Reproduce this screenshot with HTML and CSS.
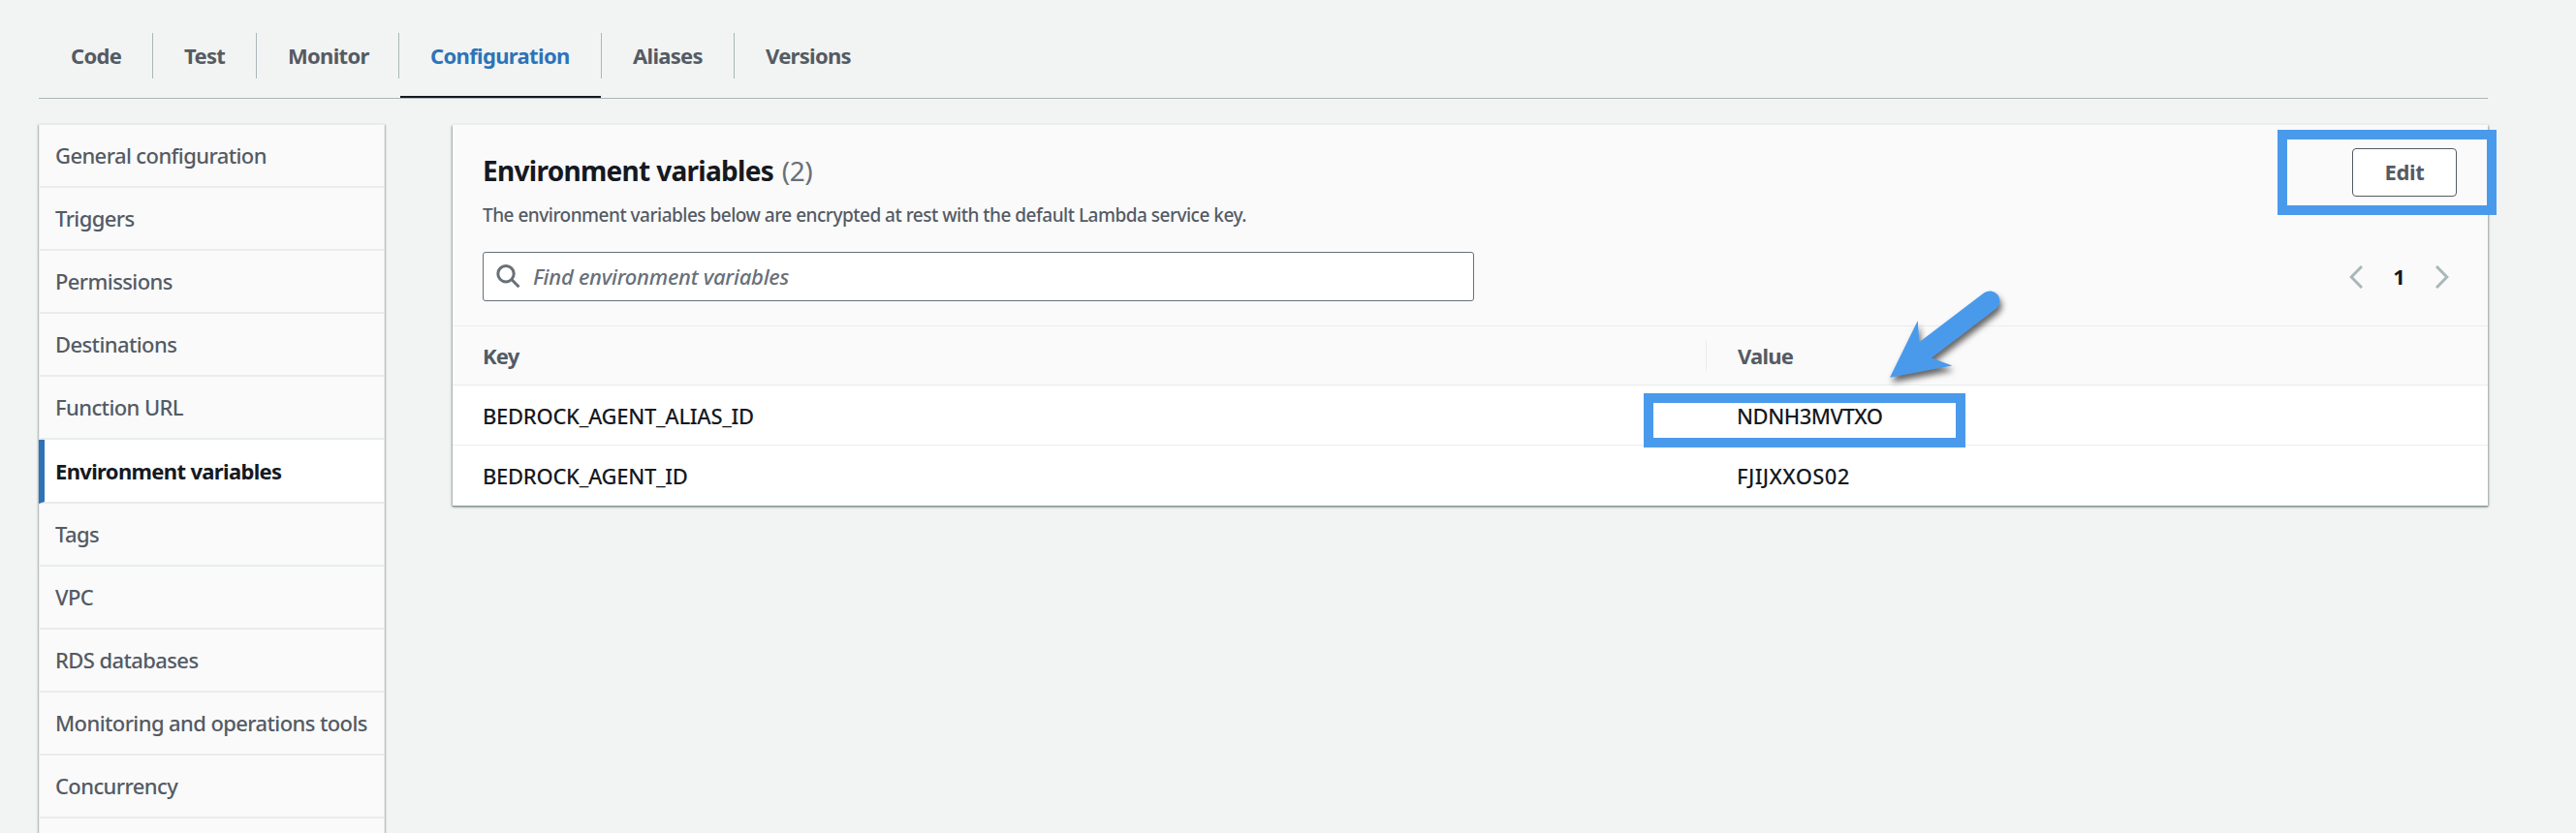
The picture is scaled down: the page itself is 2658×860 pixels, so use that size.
FILE: index.html
```html
<!DOCTYPE html>
<html lang="en">
<head>
<meta charset="utf-8">
<title>Configuration - Environment variables</title>
<link rel="stylesheet" href="styles.css">
</head>
<body>
<nav class="tabs">
  <a class="tab tab-code">Code</a>
  <a class="tab tab-test">Test</a>
  <a class="tab tab-monitor">Monitor</a>
  <a class="tab tab-configuration active">Configuration</a>
  <a class="tab tab-aliases">Aliases</a>
  <a class="tab tab-versions">Versions</a>
</nav>
<div class="content">
  <aside class="side">
    <a class="side-item">General configuration</a>
    <a class="side-item">Triggers</a>
    <a class="side-item">Permissions</a>
    <a class="side-item">Destinations</a>
    <a class="side-item">Function URL</a>
    <a class="side-item selected">Environment variables</a>
    <a class="side-item">Tags</a>
    <a class="side-item">VPC</a>
    <a class="side-item">RDS databases</a>
    <a class="side-item">Monitoring and operations tools</a>
    <a class="side-item">Concurrency</a>
  </aside>
  <main class="card">
    <header class="card-head">
      <div class="head-row">
        <div>
          <h2 class="title">Environment variables <span class="count">(2)</span></h2>
          <p class="desc">The environment variables below are encrypted at rest with the default Lambda service key.</p>
        </div>
        <div class="edit-wrap">
          <button class="edit">Edit</button>
          <span class="mark mark-edit"></span>
        </div>
      </div>
      <div class="filter-row">
        <div class="search">
          <svg class="search-icon" width="26" height="26" viewBox="0 0 26 26" fill="none" stroke="#687078" stroke-width="3"><circle cx="10" cy="9.7" r="8.2"/><path d="M15.8 15.5l7.7 7.7"/></svg>
          <span class="placeholder">Find environment variables</span>
        </div>
        <div class="pager">
          <svg width="14" height="24" viewBox="0 0 14 24" fill="none" stroke="#aab7b8" stroke-width="3"><path d="M13 1L2.2 12L13 23"/></svg>
          <span class="page">1</span>
          <svg width="14" height="24" viewBox="0 0 14 24" fill="none" stroke="#aab7b8" stroke-width="3"><path d="M1 1L11.8 12L1 23"/></svg>
        </div>
      </div>
    </header>
    <div class="row row-head">
      <div class="cell">Key</div>
      <div class="cell cell-value">Value</div>
    </div>
    <div class="row">
      <div class="cell key">BEDROCK_AGENT_ALIAS_ID</div>
      <div class="cell cell-value alias">NDNH3MVTXO
        <span class="mark mark-value"></span>
        <svg class="arrow" width="150" height="120" viewBox="0 0 150 120"><path fill="#4a9aec" d="M20 99.7L48.8 41L50.3 63.3L117.3 12.3A10.3 10.3 0 0 1 130.2 28.3L63 79.5L84.3 87.5Z"/></svg>
      </div>
    </div>
    <div class="row">
      <div class="cell key">BEDROCK_AGENT_ID</div>
      <div class="cell cell-value agent">FJIJXXOS02</div>
    </div>
  </main>
</div>
</body>
</html>
```
FILE: styles.css
```css
* { box-sizing: border-box; }
body {
  margin: 0;
  height: 860px;
  overflow: hidden;
  background: #f2f4f3;
  color: #16191f;
  font: 500 22px/30px "Noto Sans", "Open Sans", sans-serif;
}

/* Tabs */
.tabs {
  display: flex;
  align-items: flex-start;
  margin: 0 91px 0 40px;
  height: 102px;
  padding-top: 34px;
  border-bottom: 1px solid #aab7b8;
}
.tab {
  height: 47px;
  padding-left: 32px;
  border-right: 1px solid #aab7b8;
  color: #545b64;
  font-weight: 700;
  line-height: 47px;
  letter-spacing: -.7px;
  white-space: nowrap;
}
.tab-code { width: 118px; padding-left: 33px; }
.tab-test { width: 107px; }
.tab-monitor { width: 147px; }
.tab-configuration { width: 209px; }
.tab-aliases { width: 137px; }
.tab-versions { border-right: 0; }
.tab.active { position: relative; color: #2e73b8; letter-spacing: -.66px; }
.tab.active::after {
  content: "";
  position: absolute;
  left: 1px;
  right: 0;
  bottom: -20px;
  height: 2px;
  background: #16191f;
}

.content {
  display: flex;
  gap: 70px;
  height: 758px;
  padding: 26px 91px 0 40px;
}

/* Side navigation */
.side {
  width: 357px;
  flex: none;
  background: #fafafa;
  border: 1px solid #eaeded;
  border-bottom: 0;
  box-shadow: 0 1px 2px rgba(0, 28, 36, .4), 1px 1px 2px rgba(0, 28, 36, .15), -1px 1px 2px rgba(0, 28, 36, .15);
}
.side-item {
  display: block;
  height: 65px;
  padding-left: 16px;
  border-bottom: 2px solid #e8ecec;
  color: #545b64;
  line-height: 63px;
  letter-spacing: -.6px;
  white-space: nowrap;
}
.side-item.selected {
  height: 66px;
  margin-left: -1px;
  padding-left: 11px;
  border-left: 6px solid #2e73b8;
  border-bottom-color: #e8ecec;
  background: #fff;
  color: #16191f;
  font-weight: 700;
  line-height: 64px;
  letter-spacing: -.66px;
}

/* Card */
.card {
  flex: 1;
  margin-top: 1px;
  height: 393px;
  background: #fff;
  box-shadow: 0 -1px 0 #eaeded, 0 1px 1px #879596, 0 1px 3px rgba(0, 28, 36, .4), 1px 1px 2px rgba(0, 28, 36, .15), -1px 1px 2px rgba(0, 28, 36, .15);
}
.card-head {
  height: 208px;
  padding: 24px 32px 0 31px;
  border-bottom: 1px solid #eaeded;
  background: #fafafa;
}
.head-row { display: flex; justify-content: space-between; height: 107px; }
.title {
  margin: 0;
  padding-top: 3px;
  font-size: 28px;
  font-weight: 700;
  line-height: 40px;
  letter-spacing: -.7px;
}
.count { margin-left: 2px; color: #687078; font-weight: 400; letter-spacing: -.4px; }
.desc {
  margin: 12px 0 0;
  color: #545b64;
  font-size: 19px;
  line-height: 28px;
  letter-spacing: -.5px;
}
.edit-wrap { position: relative; width: 108px; height: 50px; }
.edit {
  width: 108px;
  height: 50px;
  padding: 0 0 2px;
  border: 1px solid #545b64;
  border-radius: 4px;
  background: #fff;
  color: #545b64;
  font: 700 22px/46px "Noto Sans", "Open Sans", sans-serif;
  letter-spacing: -.3px;
}
.mark { position: absolute; border: 10px solid #4a9aec; }
.mark-edit { left: -77px; top: -19px; width: 226px; height: 88px; }

.filter-row { display: flex; justify-content: space-between; align-items: center; height: 51px; }
.search {
  display: flex;
  align-items: center;
  gap: 12px;
  width: 1023px;
  height: 51px;
  padding-left: 13px;
  border: 1px solid #687078;
  border-radius: 3px;
  background: #fff;
}
.placeholder {
  padding-bottom: 2px;
  color: #687078;
  font-style: italic;
  letter-spacing: -.26px;
}
.pager { display: flex; align-items: center; gap: 31px; padding-right: 8px; }
.page { width: 13px; padding-bottom: 1px; font-weight: 700; text-align: center; }

/* Table */
.row { display: flex; height: 62px; border-bottom: 1px solid #eaeded; line-height: 62px; }
.row:last-child { border-bottom: 0; }
.row-head {
  height: 61px;
  padding-bottom: 1px;
  align-items: center;
  background: #fafafa;
  color: #545b64;
  font-weight: 700;
  line-height: 32px;
  letter-spacing: -.8px;
}
.cell { width: 1293px; padding-left: 31px; white-space: nowrap; }
.cell-value { position: relative; width: 807px; padding-left: 32px; }
.row-head .cell-value { border-left: 1px solid #eaeded; padding-left: 32px; }
.key { letter-spacing: -.3px; }
.alias { letter-spacing: -.5px; }
.agent { letter-spacing: .35px; }
.mark-value { left: -64px; top: 8px; width: 332px; height: 56px; }
.arrow {
  position: absolute;
  left: 170px;
  top: -108px;
  overflow: visible;
  filter: drop-shadow(2px 5px 3px rgba(0, 0, 0, .6));
}
```
